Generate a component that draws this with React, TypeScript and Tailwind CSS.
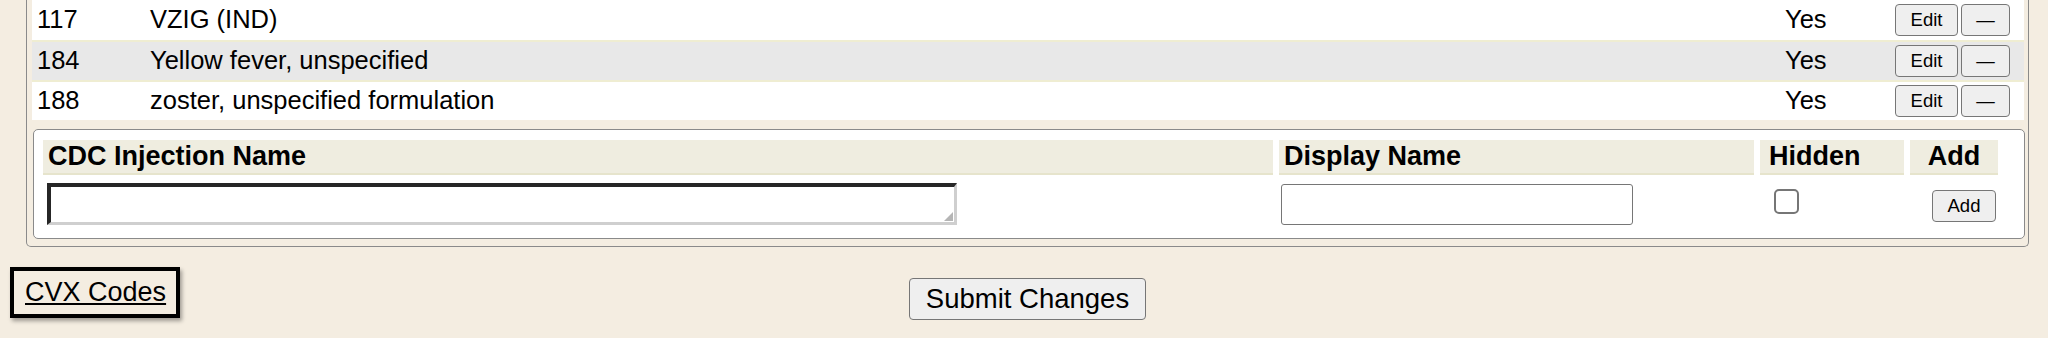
import React from "react";

const rows = [
  { code: "117", name: "VZIG (IND)", bg: "bg-white" },
  { code: "184", name: "Yellow fever, unspecified", bg: "bg-[#e8e8e8]" },
  { code: "188", name: "zoster, unspecified formulation", bg: "bg-white" },
];

function SmallButton({ children, w }: { children: React.ReactNode; w: string }) {
  return (
    <button
      className={`${w} h-[32px] flex items-center justify-center rounded-[4px] border border-[#767676] bg-[#efefef] text-[18.5px] leading-none text-black`}
    >
      {children}
    </button>
  );
}

export default function App() {
  return (
    <div
      className="w-[2048px] h-[338px] overflow-hidden bg-[#f4ede1] text-black"
      style={{ fontFamily: '"Liberation Sans", Arial, sans-serif' }}
    >
      {/* outer box */}
      <div className="ml-[26px] w-[2003px] border-l border-r border-b border-[#8a8a8a] rounded-b-[5px] pl-[5px] pr-[4px] pb-[7px]">
        {/* rows */}
        <div className="flex flex-col">
          {rows.map((r, i) => (
            <div
              key={r.code}
              className={`${r.bg} h-[40px] flex items-center pl-[5px] pr-[14px] ${i > 0 ? "border-t-2 border-[#efedd2]" : ""}`}
            >
              <div className="w-[113px] text-[25.5px] leading-none">{r.code}</div>
              <div className="flex-1 text-[25.5px] leading-none">{r.name}</div>
              <div className="w-[110px] text-[25.5px] leading-none">Yes</div>
              <div className="flex gap-[3px]">
                <SmallButton w="w-[63px]">Edit</SmallButton>
                <SmallButton w="w-[49px]">—</SmallButton>
              </div>
            </div>
          ))}
        </div>

        {/* add form */}
        <div className="mt-[9px] ml-[1px] mr-[-1px] rounded-[5px] border border-[#8a8a8a] bg-white pl-[9px] pt-[10px] pb-[13px]">
          <div className="grid grid-cols-[1230px_475px_144px_88px] gap-x-[6px] gap-y-[8px]">
            <div className="h-[35px] bg-[#efede0] border-b-2 border-[#e6e4cc] flex items-center pl-[5px] text-[27px] font-bold leading-none">
              CDC Injection Name
            </div>
            <div className="h-[35px] bg-[#efede0] border-b-2 border-[#e6e4cc] flex items-center pl-[5px] text-[27px] font-bold leading-none">
              Display Name
            </div>
            <div className="h-[35px] bg-[#efede0] border-b-2 border-[#e6e4cc] flex items-center pl-[9px] text-[27px] font-bold leading-none">
              Hidden
            </div>
            <div className="h-[35px] bg-[#efede0] border-b-2 border-[#e6e4cc] flex items-center justify-center text-[27px] font-bold leading-none">
              Add
            </div>

            <div className="pl-[4px]">
              <div className="relative w-[910px] h-[42px] bg-white border-t-[4px] border-l-[4px] border-t-[#262626] border-l-[#262626] border-r-[3px] border-b-[3px] border-r-[#cfcfcf] border-b-[#cfcfcf]">
                <textarea className="w-full h-full resize-none outline-none bg-transparent" />
                <div className="absolute right-[1px] bottom-[1px] w-0 h-0 border-l-[9px] border-l-transparent border-b-[9px] border-b-[#b5b5b5]" />
              </div>
            </div>
            <div className="pl-[2px] pt-[1px]">
              <input
                type="text"
                className="w-[352px] h-[41px] rounded-[3px] border border-[#767676] bg-white outline-none"
              />
            </div>
            <div className="pl-[14px] pt-[6px]">
              <div className="w-[25px] h-[25px] rounded-[5px] border-2 border-[#767676] bg-white" />
            </div>
            <div className="flex pl-[22px] pt-[7px]">
              <SmallButton w="w-[64px]">Add</SmallButton>
            </div>
          </div>
        </div>
      </div>

      {/* bottom */}
      <div className="grid grid-cols-[1fr_auto_1fr] items-start pl-[10px] pr-[3px]">
        <div className="justify-self-start mt-[20px]">
          <div className="w-[170px] h-[51px] border-[4px] border-black shadow-[2px_3px_4px_rgba(0,0,0,0.35)] flex items-center pl-[11px]">
            <a href="#" className="text-[27px] leading-none underline text-black">
              CVX Codes
            </a>
          </div>
        </div>
        <button className="mt-[31px] w-[237px] h-[42px] rounded-[4px] border border-[#767676] bg-[#efefef] text-[27.5px] leading-none text-black">
          Submit Changes
        </button>
        <div />
      </div>
    </div>
  );
}
